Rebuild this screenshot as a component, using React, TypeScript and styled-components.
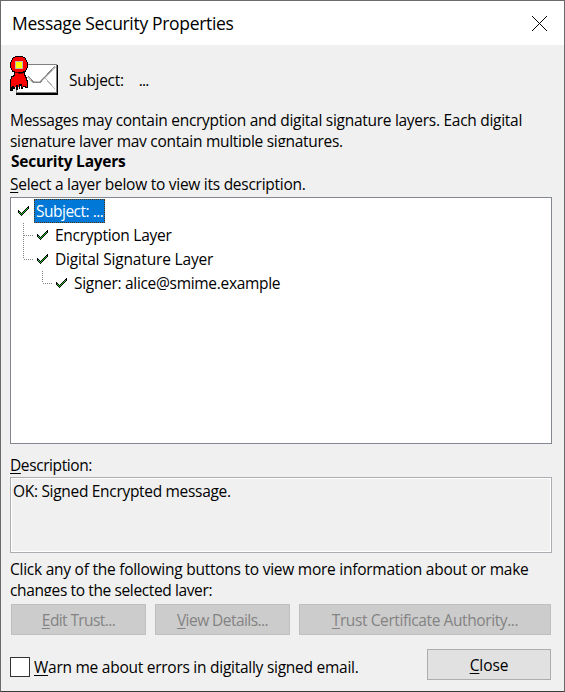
import React from "react";
import styled, { createGlobalStyle } from "styled-components";

const GlobalStyle = createGlobalStyle`
  * { box-sizing: border-box; }
  body { margin: 0; }
`;

const Dialog = styled.main`
  width: 565px;
  height: 692px;
  display: flex;
  flex-direction: column;
  overflow: hidden;
  background: #f0f0f0;
  border: 1px solid #6b6969;
  border-bottom-color: #3c3b3b;
  color: #000;
  font: 15.5px/21px "Open Sans", "Noto Sans", sans-serif;
  white-space: nowrap;
`;

const TitleBar = styled.header`
  flex: none;
  height: 44px;
  padding: 0 16px 0 11px;
  display: flex;
  align-items: center;
  justify-content: space-between;
  background: #fff;
`;

const Title = styled.h1`
  margin: 0;
  font-size: 17.5px;
  font-weight: 400;
  line-height: 44px;
  letter-spacing: -0.32px;
`;

const CloseIcon = styled.button`
  width: 17px;
  height: 17px;
  padding: 0;
  border: 0;
  background: none;
  display: flex;
`;

const Body = styled.section`
  flex: 1;
  padding: 0 12px 0 9px;
  display: flex;
  flex-direction: column;
`;

const SubjectRow = styled.div`
  height: 65px;
  padding-top: 11px;
  display: flex;
  align-items: flex-start;
`;

const SubjectText = styled.div`
  display: flex;
  gap: 15px;
  margin: 14px 0 0 10px;
`;

const Line = styled.span<{ $spacing?: number }>`
  display: block;
  letter-spacing: ${(p) => p.$spacing ?? 0}px;
`;

const ClippedNote = styled.div<{ $top?: number }>`
  height: 37px;
  margin-top: ${(p) => p.$top ?? 0}px;
  overflow: hidden;
`;

const Heading = styled.h2`
  margin: 4px 0 0 1px;
  font-size: 15.5px;
  line-height: 21px;
  font-weight: 700;
  letter-spacing: -0.23px;
`;

const FieldLabel = styled.label<{ $top: number; $spacing?: number }>`
  display: block;
  margin-top: ${(p) => p.$top}px;
  letter-spacing: ${(p) => p.$spacing ?? 0}px;
`;

const Key = styled.span`
  text-decoration: underline;
  text-decoration-thickness: 1px;
  text-underline-offset: 2px;
  text-decoration-skip-ink: none;
`;

const Tree = styled.div`
  flex: none;
  height: 247px;
  margin-top: 2px;
  padding: 1px 0 0 4px;
  border: 1px solid #828790;
  background: #fff;
`;

const TreeRow = styled.div`
  height: 24px;
  display: flex;
  align-items: center;
`;

const TreeLabel = styled.span<{ $selected?: boolean; $spacing: number }>`
  height: 24px;
  padding: 0 2px;
  line-height: 24px;
  letter-spacing: ${(p) => p.$spacing}px;
  color: ${(p) => (p.$selected ? "#fff" : "#000")};
  background: ${(p) => (p.$selected ? "#0078d7" : "transparent")};
  outline: ${(p) => (p.$selected ? "1px dotted #5a3208" : "none")};
  outline-offset: -1px;
`;

const Branch = styled.svg`
  flex: none;
  display: block;
`;

const DescriptionBox = styled.div`
  flex: none;
  height: 76px;
  margin-top: 1px;
  padding: 3px 2px;
  border: 1px solid #abadb3;
  box-shadow: inset 0 0 0 1px #fff;
`;

const ButtonRow = styled.div`
  display: flex;
  gap: 9px;
  margin: 8px 0 0 1px;
`;

const Button = styled.button<{ $width: number; $spacing?: number }>`
  flex: none;
  width: ${(p) => p.$width}px;
  height: 31px;
  padding: 2px 0 0;
  border: 1px solid #adadad;
  background: #e1e1e1;
  color: #000;
  font: inherit;
  letter-spacing: ${(p) => p.$spacing ?? 0}px;
  &:disabled {
    border-color: #bfbfbf;
    background: #ccc;
    color: #838383;
  }
`;

const Footer = styled.footer`
  height: 31px;
  margin-top: 14px;
  padding-right: 1px;
  display: flex;
  justify-content: space-between;
`;

const CheckLabel = styled.label`
  display: flex;
  gap: 4px;
  padding-top: 8px;
`;

const CheckBox = styled.input`
  appearance: none;
  width: 20px;
  height: 20px;
  margin: 0;
  border: 1px solid #333;
  background: #fff;
`;

const tickRows = [5, 6, 7, 8, 7, 6, 5, 4, 3, 2, 1];

const Check = ({ x }: { x: number }) => (
  <g transform={`translate(${x} 7)`} shapeRendering="crispEdges">
    {tickRows.map((y, i) => (
      <rect key={i} x={i} y={y - 1} width="1" height="3" fill="#000" />
    ))}
    {tickRows.slice(1, -1).map((y, i) => (
      <rect key={i} x={i + 1} y={y} width="1" height="1" fill="#2ecc2e" />
    ))}
  </g>
);

const treeItems = [
  { text: "Subject: ...", width: 19, check: 3, line: "", selected: true, spacing: -0.5 },
  { text: "Encryption Layer", width: 38, check: 22, line: "M8.5 0V24M9 12.5H19", spacing: -0.28 },
  { text: "Digital Signature Layer", width: 38, check: 22, line: "M8.5 0V12M9 12.5H19", spacing: -0.17 },
  { text: "Signer: alice@smime.example", width: 57, check: 41, line: "M27.5 0V12M28 12.5H38", spacing: -0.31 },
];

const SignedMail = () => (
  <svg width="49" height="41" viewBox="0 0 49 41" shapeRendering="crispEdges">
    <path d="M6 9H48V39H6z" fill="#000" />
    <path d="M6 8H47V37H6z" fill="#808080" />
    <path d="M7 9H46V36H7z" fill="#fff" />
    <path d="M35 22L45 33" fill="none" stroke="#b8b8b8" />
    <path d="M18 21L23 26H30L45 11" fill="none" stroke="#c4c4c4" strokeWidth="2" />
    <path d="M18 20L24 26.5H30L45 10" fill="none" stroke="#858585" />
    <path d="M5 0h8v1h2v1h1v2h1v2h1v6h-1v2h-1v2h-1v3h1v2h1v3h1v8h-3v-1h-2v2h-2v-3h-1v3H9v-2H8v3H6v-3H5v2H3v2H0V23h1v-3h2v-1h1v-3H2v-2H1v-2H0V6h1V4h1V2h1V1h2z" fill="#000" />
    <path d="M5 1h8v1h2v2h1v2h1v6h-1v2h-1v1h-2v1H5v-1H3v-1H2v-2H1V6h1V4h1V2h2zM5 17h9v3h1v2h1v3h1v6h-1v-1h-3v1h-1v-3h-3v3H8v-2H6v2H4v-1H2v1H1v-8h1v-2h2v-1h1z" fill="#f00" />
    <path d="M5 5h8v8H5z" fill="#b8b8b8" />
    <path d="M6 6h6v6H6z" fill="#ff0" />
    <path d="M5 16h3v1H5zM8 17h5v1H8z" fill="#700000" />
  </svg>
);

export default function App() {
  return (
    <>
      <GlobalStyle />
      <Dialog>
        <TitleBar>
          <Title>Message Security Properties</Title>
          <CloseIcon aria-label="Close">
            <svg width="17" height="17" viewBox="0 0 17 17">
              <path d="M1 1L16 16M16 1L1 16" stroke="#000" strokeWidth="1" />
            </svg>
          </CloseIcon>
        </TitleBar>
        <Body>
          <SubjectRow>
            <SignedMail />
            <SubjectText>
              <Line $spacing={-0.3}>Subject:</Line>
              <Line $spacing={-0.8}>...</Line>
            </SubjectText>
          </SubjectRow>
          <ClippedNote>
            <Line $spacing={-0.28}>Messages may contain encryption and digital signature layers. Each digital</Line>
            <Line $spacing={-0.285}>signature layer may contain multiple signatures.</Line>
          </ClippedNote>
          <Heading>Security Layers</Heading>
          <FieldLabel $top={2} $spacing={-0.265}>
            <Key>S</Key>elect a layer below to view its description.
          </FieldLabel>
          <Tree>
            {treeItems.map((item) => (
              <TreeRow key={item.text}>
                <Branch width={item.width} height="24">
                  {item.line && <path d={item.line} fill="none" stroke="#808080" strokeDasharray="1 1" shapeRendering="crispEdges" />}
                  <Check x={item.check} />
                </Branch>
                <TreeLabel $selected={item.selected} $spacing={item.spacing}>{item.text}</TreeLabel>
              </TreeRow>
            ))}
          </Tree>
          <FieldLabel $top={11} $spacing={-0.4}>
            <Key>D</Key>escription:
          </FieldLabel>
          <DescriptionBox>
            <Line $spacing={-0.31}>OK: Signed Encrypted message.</Line>
          </DescriptionBox>
          <ClippedNote $top={6}>
            <Line $spacing={-0.25}>Click any of the following buttons to view more information about or make</Line>
            <Line $spacing={-0.38}>changes to the selected layer:</Line>
          </ClippedNote>
          <ButtonRow>
            <Button $width={135} $spacing={-0.6} disabled><Key>E</Key>dit Trust...</Button>
            <Button $width={135} $spacing={-0.55} disabled><Key>V</Key>iew Details...</Button>
            <Button $width={252} $spacing={-0.4} disabled><Key>T</Key>rust Certificate Authority...</Button>
          </ButtonRow>
          <Footer>
            <CheckLabel>
              <CheckBox type="checkbox" />
              <Line $spacing={-0.26}><Key>W</Key>arn me about errors in digitally signed email.</Line>
            </CheckLabel>
            <Button $width={124} $spacing={-0.1}><Key>C</Key>lose</Button>
          </Footer>
        </Body>
      </Dialog>
    </>
  );
}
